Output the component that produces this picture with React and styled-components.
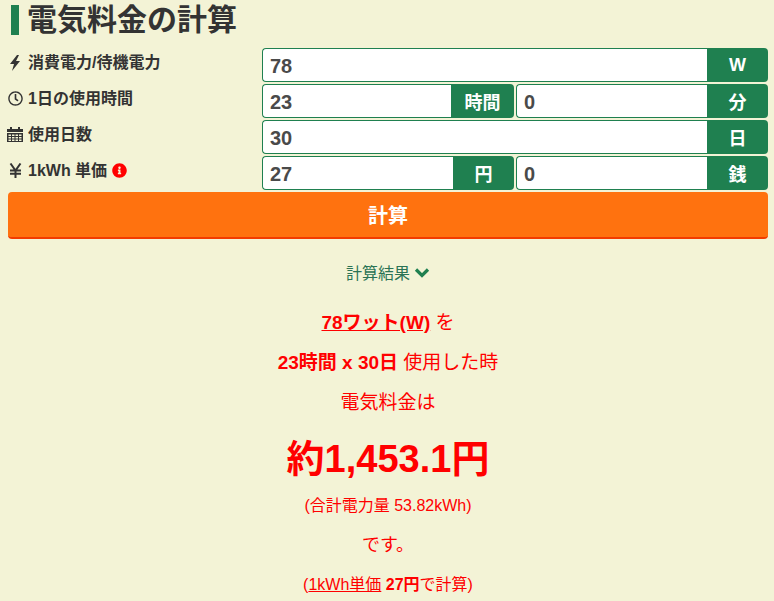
import styled, { createGlobalStyle } from "styled-components";
import { FaRegClock, FaInfoCircle } from "react-icons/fa";

const GlobalStyle = createGlobalStyle`
  html, body {
    margin: 0;
    padding: 0;
    background: #f3f3d6;
    overflow: hidden;
  }
  body {
    font-family: "Liberation Sans", "Noto Sans CJK JP", sans-serif;
    color: #333;
  }
`;

const Page = styled.div`
  height: 601px;
  overflow: hidden;
  padding: 0 6px 0 8px;
`;

const Title = styled.h1`
  margin: 5px 0 13px 3px;
  height: 30px;
  padding-left: 8px;
  border-left: 8px solid #1f8050;
  font-size: 30px;
  line-height: 30px;
  font-weight: 700;
  color: #333;
`;

const Form = styled.div`
  display: flex;
  flex-direction: column;
  gap: 2px;
`;

const Row = styled.div`
  display: flex;
  height: 34px;
`;

const Label = styled.label`
  width: 254px;
  flex: none;
  display: flex;
  align-items: flex-start;
  gap: 6px;
  padding-top: 4px;
  font-size: 16px;
  line-height: 22px;
  font-weight: 700;
  color: #333;
`;

const IconSlot = styled.span`
  width: 14px;
  flex: none;
  display: flex;
  justify-content: center;
  padding-top: 3px;
  font-size: 15px;
  svg {
    flex: none;
  }
`;

const Info = styled(FaInfoCircle)`
  color: #f00;
  font-size: 15px;
  margin: 3px 0 0 -1px;
  flex: none;
`;

const Group = styled.div`
  display: flex;
  flex: 1 1 0;
  min-width: 0;
  & + & {
    margin-left: 2px;
  }
`;

const Input = styled.input`
  flex: 1;
  min-width: 0;
  box-sizing: border-box;
  height: 34px;
  padding: 2px 7px 0;
  border: 1px solid #1f8050;
  border-right: 0;
  border-radius: 4px 0 0 4px;
  background: #fff;
  font-family: inherit;
  font-size: 20px;
  font-weight: 700;
  color: #4a4a4a;
  outline: none;
`;

const Addon = styled.span`
  width: ${(p) => p.$width}px;
  flex: none;
  display: flex;
  align-items: center;
  justify-content: center;
  background: #1f8050;
  border-radius: 0 4px 4px 0;
  color: #fff;
  font-size: 18px;
  font-weight: 700;
`;

const Submit = styled.button`
  display: block;
  width: 100%;
  height: 47px;
  margin-top: 2px;
  padding: 0;
  border: 0;
  border-bottom: 2px solid #f33b00;
  border-radius: 4px;
  background: #ff720f;
  color: #fff;
  font-family: inherit;
  font-size: 20px;
  font-weight: 700;
`;

const ResultToggle = styled.div`
  margin-top: 22px;
  display: flex;
  justify-content: center;
  align-items: center;
  gap: 4px;
  height: 22px;
  font-size: 16px;
  color: #2b7355;
`;

const Result = styled.div`
  margin-top: 20px;
  text-align: center;
  color: #f00;
  font-size: 19px;
`;

const Line = styled.p`
  margin: 0;
  height: ${(p) => p.$height || 40}px;
  line-height: ${(p) => p.$height || 40}px;
  font-size: ${(p) => p.$size || 19}px;
`;

const Strong = styled.strong`
  font-weight: 700;
`;

const Total = styled.p`
  margin: 0;
  height: 72px;
  line-height: 72px;
  font-size: 38px;
  font-weight: 700;
`;

const Under = styled.span`
  text-decoration: underline;
`;

const BoltIcon = () => (
  <svg width="12" height="16" viewBox="0 0 12 16" fill="#333">
    <path d="M8 0L1 9h4l-2 7 8-10H7l3-6z" />
  </svg>
);

const CalendarIcon = () => (
  <svg width="16" height="15" viewBox="0 0 16 15" fill="#333">
    <rect x="3" y="0" width="2" height="2" />
    <rect x="11" y="0" width="2" height="2" />
    <rect x="0" y="2" width="16" height="3" />
    <path d="M0 6h16v9H0zM1.500 7.500v1.500h2.500V7.500zM5 7.500v1.500h2.500V7.500zM8.500 7.500v1.500H11V7.500zM12 7.500v1.500h2.500V7.500zM1.500 10v1.500h2.500V10zM5 10v1.500h2.500V10zM8.500 10v1.500H11V10zM12 10v1.500h2.500V10zM1.500 12.500V14h2.500v-1.500zM5 12.500V14h2.500v-1.500zM8.500 12.500V14H11v-1.500zM12 12.500V14h2.500v-1.500z" fillRule="evenodd" />
  </svg>
);

const YenIcon = () => (
  <svg width="13" height="15" viewBox="0 0 13 15">
    <path d="M1.500 0.500L6.500 7.500L11.500 0.500M6.500 7.500V15M1 7.500H12M1 10.800H12" fill="none" stroke="#333" strokeWidth="2" />
  </svg>
);

const ChevronIcon = () => (
  <svg width="16" height="11" viewBox="0 0 16 11">
    <path d="M2 2.500l6 6 6-6" fill="none" stroke="#1f8050" strokeWidth="3.200" />
  </svg>
);

export default function App() {
  return (
    <Page>
      <GlobalStyle />
      <Title>電気料金の計算</Title>
      <Form>
        <Row>
          <Label>
            <IconSlot><BoltIcon /></IconSlot>
            消費電力/待機電力
          </Label>
          <Group>
            <Input defaultValue="78" />
            <Addon $width={61}>W</Addon>
          </Group>
        </Row>
        <Row>
          <Label>
            <IconSlot><FaRegClock /></IconSlot>
            1日の使用時間
          </Label>
          <Group>
            <Input defaultValue="23" />
            <Addon $width={63}>時間</Addon>
          </Group>
          <Group>
            <Input defaultValue="0" />
            <Addon $width={61}>分</Addon>
          </Group>
        </Row>
        <Row>
          <Label>
            <IconSlot><CalendarIcon /></IconSlot>
            使用日数
          </Label>
          <Group>
            <Input defaultValue="30" />
            <Addon $width={61}>日</Addon>
          </Group>
        </Row>
        <Row>
          <Label>
            <IconSlot><YenIcon /></IconSlot>
            1kWh 単価
            <Info />
          </Label>
          <Group>
            <Input defaultValue="27" />
            <Addon $width={61}>円</Addon>
          </Group>
          <Group>
            <Input defaultValue="0" />
            <Addon $width={61}>銭</Addon>
          </Group>
        </Row>
      </Form>
      <Submit>計算</Submit>
      <ResultToggle>
        計算結果 <ChevronIcon />
      </ResultToggle>
      <Result>
        <Line><Strong><Under>78ワット(W)</Under></Strong> を</Line>
        <Line><Strong>23時間 x 30日</Strong> 使用した時</Line>
        <Line>電気料金は</Line>
        <Total>約1,453.1円</Total>
        <Line $height={22} $size={16}>(合計電力量 53.82kWh)</Line>
        <Line $height={56} $size={18}>です。</Line>
        <Line $height={24} $size={16}>(<Under>1kWh単価</Under> <Strong>27円</Strong>で計算)</Line>
      </Result>
    </Page>
  );
}
